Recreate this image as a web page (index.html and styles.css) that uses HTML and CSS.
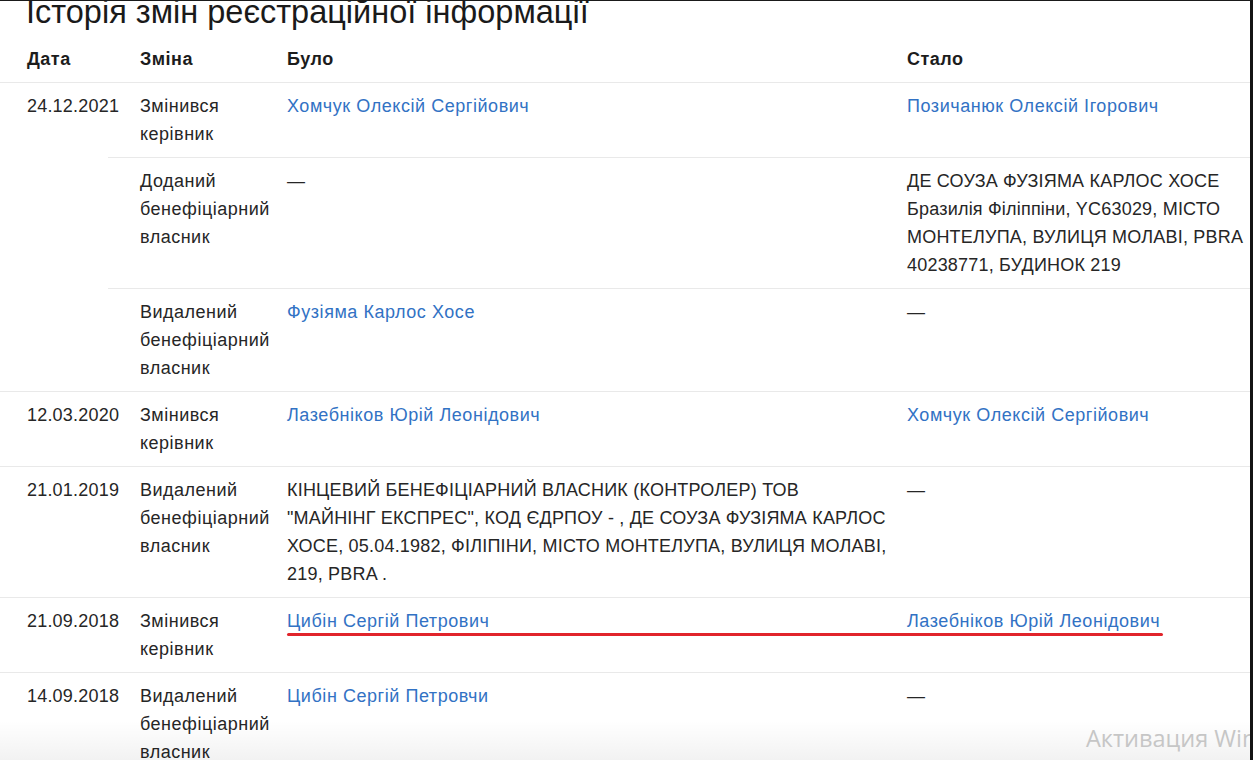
FILE: index.html
```html
<!DOCTYPE html>
<html lang="uk">
<head>
<meta charset="utf-8">
<title>Історія змін реєстраційної інформації</title>
<link rel="stylesheet" href="styles.css">
</head>
<body>
<div class="frame">
  <h1 class="title">Історія змін реєстраційної інформації</h1>
  <div class="table">
    <div class="row head">
      <div class="c">Дата</div>
      <div class="c">Зміна</div>
      <div class="c">Було</div>
      <div class="c">Стало</div>
    </div>

    <div class="group">
      <div class="c date">24.12.2021</div>
      <div class="subs">
        <div class="sub">
          <div class="c change">Змінився керівник</div>
          <div class="c was"><a href="#">Хомчук Олексій Сергійович</a></div>
          <div class="c now"><a href="#">Позичанюк Олексій Ігорович</a></div>
        </div>
        <div class="sub">
          <div class="c change">Доданий бенефіціарний власник</div>
          <div class="c was">—</div>
          <div class="c now lines">ДЕ СОУЗА ФУЗІЯМА КАРЛОС ХОСЕ<br>Бразилія Філіппіни, YC63029, МІСТО<br>МОНТЕЛУПА, ВУЛИЦЯ МОЛАВІ, PBRA<br>40238771, БУДИНОК 219</div>
        </div>
        <div class="sub">
          <div class="c change">Видалений бенефіціарний власник</div>
          <div class="c was"><a href="#">Фузіяма Карлос Хосе</a></div>
          <div class="c now">—</div>
        </div>
      </div>
    </div>

    <div class="group">
      <div class="c date">12.03.2020</div>
      <div class="subs">
        <div class="sub">
          <div class="c change">Змінився керівник</div>
          <div class="c was"><a href="#">Лазебніков Юрій Леонідович</a></div>
          <div class="c now"><a href="#">Хомчук Олексій Сергійович</a></div>
        </div>
      </div>
    </div>

    <div class="group">
      <div class="c date">21.01.2019</div>
      <div class="subs">
        <div class="sub">
          <div class="c change">Видалений бенефіціарний власник</div>
          <div class="c was lines">КІНЦЕВИЙ БЕНЕФІЦІАРНИЙ ВЛАСНИК (КОНТРОЛЕР) ТОВ<br>"МАЙНІНГ ЕКСПРЕС", КОД ЄДРПОУ - , ДЕ СОУЗА ФУЗІЯМА КАРЛОС<br>ХОСЕ, 05.04.1982, ФІЛІПІНИ, МІСТО МОНТЕЛУПА, ВУЛИЦЯ МОЛАВІ,<br>219, PBRA .</div>
          <div class="c now">—</div>
        </div>
      </div>
    </div>

    <div class="group marked">
      <div class="c date">21.09.2018</div>
      <div class="subs">
        <div class="sub">
          <div class="c change">Змінився керівник</div>
          <div class="c was"><a href="#">Цибін Сергій Петрович</a></div>
          <div class="c now"><a href="#">Лазебніков Юрій Леонідович</a></div>
        </div>
      </div>
      <span class="redline"></span>
    </div>

    <div class="group">
      <div class="c date">14.09.2018</div>
      <div class="subs">
        <div class="sub">
          <div class="c change">Видалений бенефіціарний власник</div>
          <div class="c was"><a href="#">Цибін Сергій Петровчи</a></div>
          <div class="c now">—</div>
        </div>
      </div>
    </div>
  </div>

  <div class="shade"></div>
  <div class="watermark">Активация Windows</div>
</div>
</body>
</html>
```

FILE: styles.css
```css
html, body {
  margin: 0;
  padding: 0;
  background: #ffffff;
}

.frame {
  position: relative;
  width: 1253px;
  height: 760px;
  box-sizing: border-box;
  overflow: hidden;
  border-top: 1px solid #1a1a1a;
  border-right: 3px solid #141414;
  background: #ffffff;
  font-family: "Liberation Sans", Arial, sans-serif;
  font-size: 18px;
  line-height: 28px;
  letter-spacing: 0.2px;
  color: #262626;
}

.title {
  margin: -8px 0 5px 0;
  padding-left: 26px;
  font-size: 32.5px;
  line-height: 38px;
  font-weight: 400;
  letter-spacing: 0;
  color: #1a1a1a;
  white-space: nowrap;
}

.table {
  display: flex;
  flex-direction: column;
}

.c {
  padding: 9px 0;
}

.head {
  display: grid;
  grid-template-columns: 113px 147px 620px 1fr;
  padding-left: 27px;
  border-bottom: 1px solid #e9e9e9;
  font-weight: 700;
  letter-spacing: 0.5px;
  color: #1c1c1c;
}

.group {
  position: relative;
  display: grid;
  grid-template-columns: 113px 1fr;
  padding-left: 27px;
  border-bottom: 1px solid #e9e9e9;
}

.subs {
  display: flex;
  flex-direction: column;
}

.sub {
  display: grid;
  grid-template-columns: 147px 620px 1fr;
}

.sub + .sub {
  margin-left: -32px;
  padding-left: 32px;
  border-top: 1px solid #e9e9e9;
}

.change {
  padding-right: 4px;
  letter-spacing: 0.5px;
}

.was {
  padding-right: 20px;
}

.now {
  padding-right: 4px;
}

.lines {
  white-space: nowrap;
}

a {
  color: #3272c4;
  text-decoration: none;
  letter-spacing: 0.55px;
}

.redline {
  position: absolute;
  left: 287px;
  top: 35px;
  width: 876px;
  height: 3px;
  border-radius: 2px;
  background: #e1242b;
}

.shade {
  position: absolute;
  left: 0;
  right: 0;
  bottom: 0;
  height: 40px;
  background: linear-gradient(to bottom, rgba(0, 0, 0, 0), rgba(0, 0, 0, 0.05));
  pointer-events: none;
}

.watermark {
  position: absolute;
  left: 1086px;
  top: 722px;
  font-family: "Open Sans", "Noto Sans", sans-serif;
  font-size: 23.5px;
  line-height: 30px;
  letter-spacing: 0;
  color: #c6c6c6;
  white-space: nowrap;
}
```
